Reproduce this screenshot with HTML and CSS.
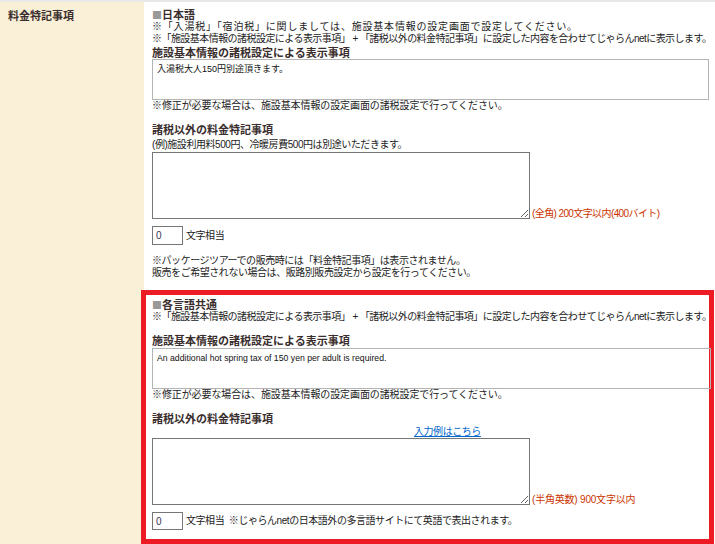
FILE: index.html
```html
<!DOCTYPE html>
<html lang="ja">
<head>
<meta charset="utf-8">
<link rel="stylesheet" href="styles.css">
</head>
<body>
<div class="row">
  <div class="label">料金特記事項</div>
  <div class="content">
    <div class="section">
      <div class="title"><span class="sq">■</span>日本語</div>
      <p class="line wide">※「入湯税」「宿泊税」に関しましては、施設基本情報の設定画面で設定してください。</p>
      <p class="line long">※「施設基本情報の諸税設定による表示事項」 + 「諸税以外の料金特記事項」に設定した内容を合わせてじゃらんnetに表示します。</p>
      <div class="heading h-first">施設基本情報の諸税設定による表示事項</div>
      <div class="readonly ro-ja">入湯税大人150円別途頂きます。</div>
      <p class="line fix">※修正が必要な場合は、施設基本情報の設定画面の諸税設定で行ってください。</p>
      <div class="heading h-second">諸税以外の料金特記事項</div>
      <p class="line example">(例)施設利用料500円、冷暖房費500円は別途いただきます。</p>
      <div class="ta-row">
        <textarea class="ta"></textarea>
        <span class="limit">(全角) 200文字以内(400バイト)</span>
      </div>
      <div class="count"><input class="num" type="text" value="0"><span>文字相当</span></div>
      <p class="line note">※パッケージツアーでの販売時には「料金特記事項」は表示されません。<br>販売をご希望されない場合は、販路別販売設定から設定を行ってください。</p>
    </div>
    <div class="section multi">
      <div class="title"><span class="sq">■</span>各言語共通</div>
      <p class="line long">※「施設基本情報の諸税設定による表示事項」 + 「諸税以外の料金特記事項」に設定した内容を合わせてじゃらんnetに表示します。</p>
      <div class="heading h-m1">施設基本情報の諸税設定による表示事項</div>
      <div class="readonly ro-en">An additional hot spring tax of 150 yen per adult is required.</div>
      <p class="line fix">※修正が必要な場合は、施設基本情報の設定画面の諸税設定で行ってください。</p>
      <div class="heading h-m2">諸税以外の料金特記事項</div>
      <div class="link-row"><a href="#" class="link">入力例はこちら</a></div>
      <div class="ta-row ta-row-m">
        <textarea class="ta"></textarea>
        <span class="limit limit-m">(半角英数) 900文字以内</span>
      </div>
      <div class="count count-m"><input class="num num-m" type="text" value="0"><span>文字相当&nbsp; ※じゃらんnetの日本語外の多言語サイトにて英語で表出されます。</span></div>
    </div>
  </div>
</div>
</body>
</html>
```

FILE: styles.css
```css
html, body {
  margin: 0;
  padding: 0;
}
body {
  background: #ececec;
  font-family: "Liberation Sans", "Noto Sans CJK JP", sans-serif;
  font-size: 10px;
  color: #222;
  letter-spacing: -0.45px;
  overflow: hidden;
  height: 544px;
}
.row {
  display: flex;
  border-top: 2px solid #e8e8e8;
  height: 542px;
  background: #fff;
}
.label {
  width: 136px;
  flex: none;
  background: #faf0d7;
  padding: 8px 0 0 8px;
  font-size: 11px;
  font-weight: bold;
  letter-spacing: 0;
  color: #3a2e2e;
  line-height: 12px;
}
.content {
  flex: 1;
  padding: 7px 0 0 8px;
  min-width: 0;
}
.section {
  width: 563px;
}
.title {
  font-size: 11px;
  font-weight: bold;
  letter-spacing: 0;
  color: #3a2e2e;
  line-height: 12px;
}
.sq {
  font-family: "Noto Sans CJK JP", sans-serif;
  font-size: 10px;
  color: #999;
  font-weight: normal;
}
.line {
  margin: 0;
  line-height: 12px;
  white-space: nowrap;
}
.wide {
  letter-spacing: 0.8px;
}
.long {
  letter-spacing: -0.55px;
}
.fix {
  letter-spacing: -0.1px;
}
.heading {
  font-size: 11px;
  font-weight: bold;
  letter-spacing: 0;
  color: #3a2e2e;
  line-height: 12px;
}
.h-first { margin-top: 2px; }
.h-second { margin-top: 12px; }
.readonly {
  box-sizing: border-box;
  border: 1px solid #b4b4b4;
  height: 41px;
  padding: 4px 4px;
  font-size: 9px;
  line-height: 11px;
  letter-spacing: 0;
  color: #111;
}
.ro-ja { width: 557px; }
.ro-en {
  width: 559px;
  margin-top: 1px;
  font-size: 8.7px;
}
.example { margin-top: 3px; }
.ta-row {
  display: flex;
  align-items: flex-end;
  gap: 2px;
  margin-top: 1px;
}
.ta-row-m { margin-top: 0; }
.ta {
  box-sizing: border-box;
  width: 378px;
  height: 67px;
  margin: 0;
  border: 1px solid #767676;
  resize: both;
  font-family: inherit;
}
.limit {
  color: #cc3300;
  line-height: 12px;
  letter-spacing: -0.6px;
  margin-bottom: -1px;
}
.limit-m {
  letter-spacing: -0.2px;
}
.count {
  display: flex;
  align-items: center;
  gap: 3px;
  margin-top: 7px;
  line-height: 12px;
}
.num {
  box-sizing: border-box;
  width: 31px;
  height: 19px;
  margin: 0;
  border: 1px solid #767676;
  padding: 1px 3px;
  font-size: 10px;
  font-family: "Liberation Sans", sans-serif;
  color: #335;
}
.num-m { height: 18px; }
.note { margin-top: 10px; }
.multi {
  box-sizing: border-box;
  width: 573px;
  margin-left: -11px;
  margin-top: 11px;
  border: 5px solid #ed1c24;
  padding: 4px 0 9px 6px;
}
.h-m1 { margin-top: 12px; }
.h-m2 { margin-top: 12px; }
.link-row {
  padding-left: 262px;
  margin-top: 1px;
  line-height: 12px;
}
.link {
  color: #0066cc;
  text-decoration: underline;
}
.count-m { margin-top: 7px; }
```
